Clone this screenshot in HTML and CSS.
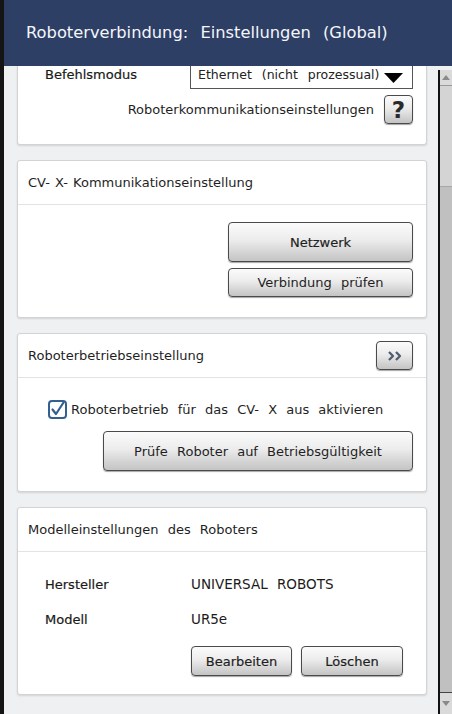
FILE: index.html
```html
<!DOCTYPE html>
<html lang="de">
<head>
<meta charset="utf-8">
<title>Roboterverbindung</title>
<link rel="stylesheet" href="styles.css">
</head>
<body>
<div class="app">
  <header class="titlebar">Roboterverbindung: Einstellungen (Global)</header>
  <div class="main">
    <div class="viewport">
      <section class="card card-cut">
        <div class="row-mode">
          <span class="label strong">Befehlsmodus</span>
          <div class="select">
            <span class="select-text">Ethernet (nicht prozessual)</span>
            <svg class="caret" width="19" height="10" viewBox="0 0 19 10"><path d="M0 0H19L9.5 10Z" fill="#000"/></svg>
          </div>
        </div>
        <div class="row-help">
          <span>Roboterkommunikationseinstellungen</span>
          <button class="btn btn-help">?</button>
        </div>
      </section>

      <section class="card">
        <div class="card-head head-tight">CV- X- Kommunikationseinstellung</div>
        <div class="card-body body-net">
          <button class="btn btn-net btn-tall strong">Netzwerk</button>
          <button class="btn btn-net">Verbindung prüfen</button>
        </div>
      </section>

      <section class="card">
        <div class="card-head">
          <span>Roboterbetriebseinstellung</span>
          <button class="btn btn-more" aria-label="Mehr">
            <svg width="16" height="10" viewBox="0 0 16 10"><path d="M2 1L6 5L2 9M9 1L13 5L9 9" fill="none" stroke="#4f5d70" stroke-width="2.3" stroke-linejoin="round"/></svg>
          </button>
        </div>
        <div class="card-body body-op">
          <label class="check-row">
            <svg class="check" width="19" height="19" viewBox="0 0 19 19"><rect x="1" y="1" width="17" height="17" rx="3" fill="#fff" stroke="#33608f" stroke-width="2"/><path d="M4.5 9.5L8 14L15.5 2.5" fill="none" stroke="#33608f" stroke-width="2.2" stroke-linecap="round" stroke-linejoin="round"/></svg>
            <span>Roboterbetrieb für das CV- X aus aktivieren</span>
          </label>
          <button class="btn btn-check btn-tall">Prüfe Roboter auf Betriebsgültigkeit</button>
        </div>
      </section>

      <section class="card">
        <div class="card-head">Modelleinstellungen des Roboters</div>
        <div class="card-body body-model">
          <div class="info-row"><span class="label info-label strong">Hersteller</span><span class="value">UNIVERSAL ROBOTS</span></div>
          <div class="info-row row-2"><span class="label info-label strong">Modell</span><span class="value">UR5e</span></div>
          <div class="model-actions">
            <button class="btn btn-edit strong">Bearbeiten</button>
            <button class="btn btn-del strong">Löschen</button>
          </div>
        </div>
      </section>
    </div>
    <div class="scrollbar">
      <div class="sb-btn sb-up"><svg width="8" height="5" viewBox="0 0 8 5"><path d="M0 5H8L4 0Z" fill="#8a8a8a"/></svg></div>
      <div class="sb-thumb"></div>
      <div class="sb-track"></div>
      <div class="sb-btn sb-down"><svg width="8" height="5" viewBox="0 0 8 5"><path d="M0 0H8L4 5Z" fill="#8a8a8a"/></svg></div>
    </div>
  </div>
</div>
</body>
</html>
```

FILE: styles.css
```css
* { box-sizing: border-box; }
html, body { margin: 0; padding: 0; }
body {
  width: 452px;
  height: 714px;
  overflow: hidden;
  background: #141414;
  font-family: "DejaVu Sans", "Noto Sans", sans-serif;
  font-size: 13px;
  color: #1f1f1f;
  word-spacing: 5px;
}
.app {
  margin-left: 4px;
  height: 714px;
  display: flex;
  flex-direction: column;
}
.titlebar {
  flex: none;
  height: 66px;
  background: #2e3f66;
  color: #f4f6fa;
  font-size: 16.3px;
  word-spacing: 7px;
  padding-left: 22px;
  padding-bottom: 2px;
  display: flex;
  align-items: center;
}
.main {
  flex: 1;
  min-height: 0;
  display: flex;
  background: #eef0f2;
}
.viewport {
  flex: 1;
  overflow: hidden;
  padding: 0 11px 0 13px;
  display: flex;
  flex-direction: column;
  gap: 15px;
}
.card {
  flex: none;
  background: #fff;
  border: 1px solid #d2d3d5;
  border-radius: 3px;
  box-shadow: 0 1px 2px rgba(0, 0, 0, 0.12);
}
.card-cut {
  border-top: none;
  border-radius: 0 0 3px 3px;
  padding-bottom: 20px;
}
.strong { -webkit-text-stroke: 0.2px currentColor; }
.row-mode {
  height: 23px;
  display: flex;
  align-items: flex-start;
}
.label { color: #1a1a1a; }
.row-mode .label {
  width: 172px;
  padding-left: 27px;
  line-height: 18px;
}
.select {
  width: 223px;
  height: 23px;
  border: 1px solid #555;
  border-top: none;
  background: #fff;
  display: flex;
  align-items: flex-start;
  padding-left: 7px;
  color: #222;
}
.select-text {
  line-height: 18px;
  font-size: 12.5px;
  word-spacing: 6px;
  white-space: nowrap;
}
.caret {
  margin-left: auto;
  margin-right: 9px;
  margin-top: 7px;
  flex: none;
}
.row-help {
  margin-top: 6px;
  display: flex;
  justify-content: flex-end;
  align-items: center;
  gap: 10px;
  padding-right: 13px;
}
.btn {
  font-family: inherit;
  font-size: 13px;
  word-spacing: 5px;
  color: #1f1f1f;
  border: 1px solid #4a4a4a;
  border-radius: 4px;
  background: linear-gradient(#fbfbfb 0%, #ececec 45%, #d2d2d2 80%, #c4c4c4 100%);
  box-shadow: 0 1px 1px rgba(0, 0, 0, 0.35);
  padding: 0;
  height: 29px;
  display: flex;
  align-items: center;
  justify-content: center;
}
.btn-tall { height: 40px; }
.btn-help {
  width: 29px;
  height: 29px;
  font-size: 23px;
  font-weight: bold;
  color: #2a2a2a;
}
.card-head {
  height: 44px;
  border-bottom: 1px solid #e3e3df;
  padding: 0 13px 0 10px;
  display: flex;
  align-items: center;
  justify-content: space-between;
  color: #1f1f1f;
}
.head-tight { word-spacing: 1px; }
.btn-more {
  width: 37px;
  height: 29px;
}
.body-net {
  padding: 17px 13px 20px;
  display: flex;
  flex-direction: column;
  align-items: flex-end;
  gap: 6px;
}
.btn-net { width: 185px; }
.body-op {
  padding: 22px 13px 20px 30px;
  display: flex;
  flex-direction: column;
}
.check-row {
  height: 19px;
  display: flex;
  align-items: center;
  gap: 4px;
}
.check { flex: none; }
.btn-check {
  margin-top: 12px;
  margin-left: auto;
  width: 310px;
}
.body-model {
  padding: 22px 13px 18px 27px;
}
.info-row {
  height: 20px;
  display: flex;
  align-items: center;
}
.row-2 { margin-top: 15px; }
.info-label { width: 146px; }
.value {
  font-size: 13.5px;
  color: #1a1a1a;
}
.model-actions {
  margin-top: 17px;
  padding-left: 146px;
  display: flex;
  gap: 9px;
}
.btn-edit { width: 101px; height: 30px; }
.btn-del { width: 102px; height: 30px; }
.scrollbar {
  flex: none;
  width: 14px;
  margin-top: 4px;
  border-left: 2px solid #111;
  background: #c0c0c0;
  display: flex;
  flex-direction: column;
}
.sb-btn {
  flex: none;
  background: #dadada;
  display: flex;
  align-items: center;
  justify-content: center;
}
.sb-up {
  height: 16px;
  border-bottom: 1px solid #9a9a9a;
}
.sb-thumb {
  flex: none;
  height: 101px;
  background: #d4d4d4;
  border-bottom: 1px solid #a8a8a8;
}
.sb-track { flex: 1; }
.sb-down {
  height: 22px;
  border-top: 1px solid #444;
}
```
